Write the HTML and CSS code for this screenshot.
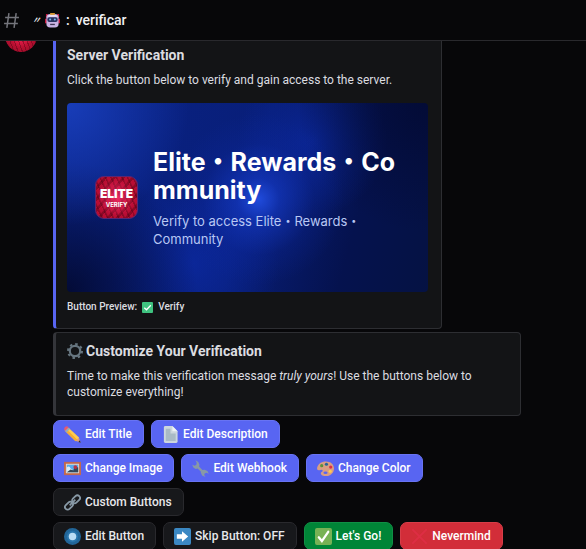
FILE: index.html
```html
<!DOCTYPE html>
<html lang="en">
<head>
<meta charset="utf-8">
<meta name="viewport" content="width=device-width, initial-scale=1">
<title>verificar</title>
<link rel="stylesheet" href="styles.css">
</head>
<body>
<header class="topbar">
  <svg class="hash" viewBox="0 0 16 16" aria-hidden="true"><path d="M5.6 1 3.6 15M12.4 1l-2 14M2 5.2h13M1 10.8h13"/></svg>
  <h1 class="channel">
    <span class="ditto">〃</span>
    <svg class="robot" viewBox="0 0 16 16" aria-hidden="true">
      <path fill="#c5183e" d="M1 1h2v4H1zM13 1h2v4h-2zM0 6h2v5H0zM14 6h2v5h-2z"/>
      <rect x="1.5" y="1" width="13" height="14.500" rx="4" fill="#c9b3e4"/>
      <path fill="#d8962f" d="M5.500 0h5v2h-5z"/>
      <path fill="#eadff6" d="M4 2h8l1 2H3z"/>
      <rect x="2.500" y="4.500" width="11" height="5" rx="2" fill="#29315f"/>
      <circle cx="5.500" cy="7" r="1.100" fill="#76b7e8"/><circle cx="10.500" cy="7" r="1.100" fill="#76b7e8"/>
      <rect x="5.5" y="11.500" width="5" height="1.400" fill="#423655"/>
    </svg>
    <span class="colon">:</span>
    <span>verificar</span>
  </h1>
</header>
<main class="chat">
  <div class="avatar" aria-hidden="true"></div>
  <div class="message">
    <article class="embed embed-server">
      <h2>Server Verification</h2>
      <p>Click the button below to verify and gain access to the server.</p>
      <section class="banner">
        <div class="logo"><strong>ELITE</strong><span>VERIFY</span></div>
        <div class="banner-text">
          <h3>Elite・Rewards・Co<br>mmunity</h3>
          <p>Verify to access Elite・Rewards・<br>Community</p>
        </div>
      </section>
      <footer>
        <span>Button Preview:</span>
        <svg class="tick" viewBox="0 0 12 12" aria-hidden="true"><rect width="12" height="12" rx="1" fill="#3fc380"/><path d="m2.5 6.2 2.4 2.3L9.6 3.5" fill="none" stroke="#fff" stroke-width="1.4"/></svg>
        <span>Verify</span>
      </footer>
    </article>
    <article class="embed embed-custom">
      <h2>
        <svg class="gear" viewBox="0 0 16 16" aria-hidden="true"><circle cx="8" cy="8" r="7" fill="none" stroke="#66757f" stroke-width="2" stroke-dasharray="2.500 2.998"/><circle cx="8" cy="8" r="5.200" fill="none" stroke="#66757f" stroke-width="2.200"/></svg>
        <span>Customize Your Verification</span>
      </h2>
      <p>Time to make this verification message <em>truly yours</em>! Use the buttons below to customize everything!</p>
    </article>
    <div class="actions">
      <div class="row">
        <button class="btn primary" type="button">
          <svg viewBox="0 0 18 18" aria-hidden="true"><path fill="#d99e82" d="m17.5 17.5-5.6-1.8 3.7-4.1z"/><path fill="#ffcc4d" d="M4.8 1.9 15.9 12.2l-3.6 4L1.5 5.5z"/><path fill="#f4ac35" d="m3 3.8 11 10.5-1.7 1.9L1.5 5.5z"/><path fill="#99aab5" d="m3.7 1 2.5 2.3-3.5 3.5L.5 4.5z"/><path fill="#ea596e" d="M.3 3.8C-.5 2.2 2.2-.3 3.8.5l1 1L1.2 5z"/><path fill="#292f33" d="m17.7 17.7-2.5-.8 1.6-1.8z"/></svg>
          Edit Title</button>
        <button class="btn primary" type="button">
          <svg viewBox="0 0 18 18" aria-hidden="true"><path fill="#ccd6dd" d="M3.500 0H11l5.500 5.500v11a1.500 1.500 0 0 1-1.500 1.500H3.500A1.500 1.500 0 0 1 2 16.500v-15A1.500 1.500 0 0 1 3.500 0z"/><path fill="#a9bac5" d="M4 8h10.500v8H4zM4 3h5v5H4z"/><path fill="#eef3f6" d="M11 0v5.500h5.500z"/></svg>
          Edit Description</button>
      </div>
      <div class="row">
        <button class="btn primary" type="button">
          <svg viewBox="0 0 18 18" aria-hidden="true"><path fill="#c1694f" d="M0 2h18v14H0z"/><path fill="#e8d8c8" d="M2 4h14v10H2z"/><path fill="#55acee" d="M3 5h12v8H3z"/><path fill="#d7edfb" d="M3 8c2-2 3-1 4 1l2 1-2 3H3z"/><path fill="#34485a" d="m3 13 4-3 3 1 1-4 4 1v5z"/><circle cx="12" cy="7.500" r="2" fill="#be3442"/></svg>
          Change Image</button>
        <button class="btn primary" type="button">
          <svg viewBox="0 0 18 18" aria-hidden="true"><path fill="#8899a6" d="M3.500.3 6.700 2l1.200 3-.4 2 3.500 3.600 2.300-.4 3 1.400 1.500 3-2.600-1.100-1.800.7-.5 1.800 1.400 2-3.600-1.500-1.300-3-.1-1.200-3.400-3.200-2 .3L1.500 8 .2 5l2.700 1L4.600 5l.4-2z"/></svg>
          Edit Webhook</button>
        <button class="btn primary" type="button">
          <svg viewBox="0 0 18 18" aria-hidden="true"><path fill="#d99e82" d="M9.500 1.500c5 0 8.500 3 8.500 7.500s-3.500 8-8 8c-3.500 0-6-1-6-3 0-1.500 2.300-1.500 2-3-.3-1.300-2-.5-3.700-.2C.8 11-.2 10.200.1 8.500.7 4.300 4.500 1.500 9.500 1.500z"/><circle cx="5" cy="6" r="1.700" fill="#5c913b"/><circle cx="10" cy="4.500" r="1.700" fill="#226699"/><circle cx="14.500" cy="7.500" r="1.700" fill="#dd2e44"/><circle cx="14" cy="12" r="1.700" fill="#ffcc4d"/><ellipse cx="9" cy="13.500" rx="2.200" ry="1.400" fill="#5865f2"/></svg>
          Change Color</button>
      </div>
      <div class="row">
        <button class="btn secondary" type="button">
          <svg viewBox="0 0 18 18" aria-hidden="true"><g fill="none" stroke="#8899a6" stroke-width="1.900"><rect x="8" y="2.800" width="9.500" height="5.600" rx="2.800" transform="rotate(-45 12.750 5.600)"/><rect x=".5" y="9.600" width="9.500" height="5.600" rx="2.800" transform="rotate(-45 5.250 12.400)"/><path d="m6 12 6-6"/></g></svg>
          Custom Buttons</button>
      </div>
      <div class="row">
        <button class="btn secondary" type="button">
          <svg viewBox="0 0 18 18" aria-hidden="true"><circle cx="9" cy="9" r="9" fill="#226699"/><circle cx="9" cy="9" r="6" fill="#2a76ad"/><circle cx="9" cy="9" r="4" fill="#bbddf5"/></svg>
          Edit Button</button>
        <button class="btn secondary" type="button">
          <svg viewBox="0 0 18 18" aria-hidden="true"><rect width="18" height="18" rx="2" fill="#3b88c3"/><path fill="#fff" d="M3 6.500h5.500v-3L15 9l-6.500 5.500v-3H3z"/></svg>
          Skip Button: OFF</button>
        <button class="btn success" type="button">
          <svg viewBox="0 0 18 18" aria-hidden="true"><rect width="18" height="18" rx="2" fill="#77b255"/><path fill="none" stroke="#fff" stroke-width="2.400" stroke-linecap="round" d="m4 9.800 3.300 4L14 4"/></svg>
          Let's Go!</button>
        <button class="btn danger" type="button">
          <svg viewBox="0 0 18 18" aria-hidden="true"><path fill="none" stroke="#dd2e44" stroke-width="2" stroke-linecap="round" d="m2 2 14 14M16 2 2 16"/></svg>
          Nevermind</button>
      </div>
    </div>
  </div>
</main>
</body>
</html>
```
FILE: styles.css
```css
* { box-sizing: border-box; }

body {
  margin: 0;
  height: 100vh;
  overflow: hidden;
  display: flex;
  flex-direction: column;
  background: #070709;
  color: #dcdde0;
  font-family: Roboto, "Noto Sans CJK JP", sans-serif;
  font-size: 12px;
  line-height: 16px;
}

h1, h2, h3, p { margin: 0; }

.topbar {
  flex: none;
  height: 41px;
  padding: 0 3px;
  display: flex;
  align-items: center;
  gap: 12px;
  border-bottom: 1px solid #29292d;
}
.hash { width: 17px; height: 17px; fill: none; stroke: #74757c; stroke-width: 1.4; }
.channel { display: flex; align-items: center; gap: 6px; font-size: 14px; font-weight: 500; color: #f0f0f2; }
.ditto { width: 7px; font-size: 9px; font-style: italic; font-weight: 700; }
.robot { width: 15px; height: 15px; }

.chat {
  flex: 1;
  min-height: 0;
  overflow: hidden;
  display: flex;
  align-items: flex-start;
  gap: 16px;
  padding-left: 5px;
}
.avatar {
  flex: none;
  width: 32px;
  height: 32px;
  margin-top: -21px;
  border-radius: 50%;
  background:
    repeating-linear-gradient(70deg, rgba(70, 0, 15, 0.4) 0 1px, transparent 1px 4px),
    radial-gradient(circle, #ff2557 0, #b90f31 50%, #8b0e27 100%);
}
.message { flex: 1; min-width: 0; display: flex; flex-direction: column; align-items: flex-start; gap: 3px; }

.embed {
  border: 1px solid #2d2e32;
  border-left: 3px solid #34353a;
  border-radius: 4px;
  background: #131416;
  padding: 9px 13px 15px 11px;
}
.embed h2 { font-size: 14px; line-height: 18px; font-weight: 700; }
.embed > p { margin-top: 8px; }
.embed-server {
  max-width: 389px;
  border-top: 0;
  border-left-color: #5865f2;
  border-top-left-radius: 0;
  border-top-right-radius: 0;
  padding-top: 5px;
  padding-bottom: 13px;
}
.embed-custom { max-width: 468px; }
.embed-custom h2 { display: flex; align-items: center; gap: 3px; }
.gear { width: 16px; height: 16px; }

.banner {
  width: 361px;
  max-width: 100%;
  min-height: 189px;
  margin-top: 15px;
  padding: 0 28px;
  display: flex;
  align-items: center;
  gap: 15px;
  border-radius: 4px;
  font-family: Inter, "Noto Sans CJK JP", sans-serif;
  background:
    radial-gradient(circle at 53% 51%, #204bdc 0, rgba(22, 60, 205, 0.6) 10%, rgba(14, 44, 175, 0.2) 26%, rgba(10, 35, 155, 0) 40%),
    radial-gradient(circle at 0 0, #183db9 0, rgba(16, 45, 160, 0) 30%),
    radial-gradient(circle at 0 100%, #030b36 0, rgba(3, 11, 54, 0) 32%),
    radial-gradient(circle at 100% 0, #030b36 0, rgba(3, 11, 54, 0) 32%),
    radial-gradient(circle at 68% 20%, rgba(12, 42, 165, 0.7) 0, rgba(12, 42, 165, 0) 26%),
    radial-gradient(circle at 35% 85%, rgba(12, 42, 165, 0.7) 0, rgba(12, 42, 165, 0) 30%),
    linear-gradient(105deg, #0a2386 0, #081e78 50%, #05124e 78%, #051243 100%);
}
.logo {
  flex: none;
  width: 43px;
  height: 43px;
  border: 1px solid #5b2672;
  border-radius: 9px;
  display: flex;
  flex-direction: column;
  align-items: center;
  justify-content: center;
  background:
    radial-gradient(ellipse at 50% 50%, rgba(255, 50, 110, 0.8) 0, rgba(220, 20, 70, 0) 65%),
    repeating-linear-gradient(65deg, rgba(60, 0, 15, 0.35) 0 1px, transparent 2px 5px),
    repeating-linear-gradient(-50deg, rgba(60, 0, 15, 0.35) 0 2px, transparent 3px 7px),
    #b80d33;
  color: #fff;
  font-size: 6px;
  line-height: 8px;
  font-weight: 700;
}
.logo strong { font-size: 12px; line-height: 14px; }
.banner-text { white-space: nowrap; }
.banner h3 { font-size: 25px; line-height: 28px; font-weight: 700; color: #fff; }
.banner p { margin-top: 8px; font-size: 13px; line-height: 18px; color: #b9c8f4; }

.embed footer { margin-top: 7px; display: flex; align-items: center; gap: 5px; font-size: 10px; font-weight: 500; }
.tick { width: 11px; height: 11px; }

.actions { margin-top: 1px; display: flex; flex-direction: column; gap: 6px; }
.row { display: flex; gap: 7px; }
.btn {
  flex: none;
  height: 28px;
  padding: 0 11px 0 10px;
  display: flex;
  align-items: center;
  gap: 4px;
  border: 1px solid #6873f3;
  border-radius: 7px;
  background: #5865f2;
  color: #fff;
  font: inherit;
  font-weight: 500;
  white-space: nowrap;
}
.btn svg { width: 17px; height: 17px; }
.secondary { background: #17181b; border-color: #29292d; color: #e8e8eb; }
.success { background: #008537; border-color: #108f45; }
.danger { background: #d22d39; border-color: #d73d48; }
```
